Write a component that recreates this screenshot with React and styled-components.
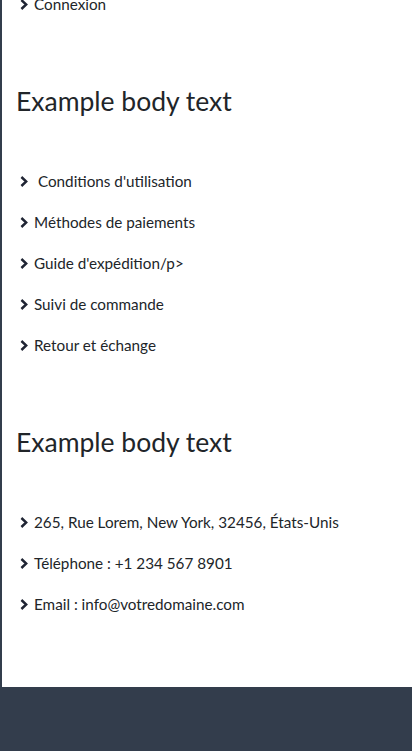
import React from "react"
import styled, { createGlobalStyle } from "styled-components"

const GlobalStyle = createGlobalStyle`
  html, body {
    margin: 0;
    padding: 0;
    background: #333d4c;
    font-family: Lato, "Open Sans", sans-serif;
    color: #212529;
  }
`

const Panel = styled.div`
  margin-left: 2px;
  background: #ffffff;
  padding: 0 14px 62px;
  overflow: hidden;
`

const Footer = styled.div`
  height: 64px;
  background: #333d4c;
`

const Heading = styled.h2`
  margin: 61px 0 44px;
  font-size: 26.5px;
  font-weight: 400;
  line-height: 31px;
  color: #212529;
`

const List = styled.ul`
  list-style: none;
  margin: ${props => (props.$first ? "-16px 0 0" : "0")};
  padding: 0 0 0 4px;
`

const Item = styled.li`
  display: flex;
  align-items: center;
  padding: 8px 0;
  line-height: 25px;
  font-size: 15.25px;
  color: #212529;
  white-space: pre;
`

const Chevron = styled.svg`
  width: 8px;
  height: 11px;
  margin-right: 6px;
  flex-shrink: 0;
`

const Arrow = () => (
  <Chevron viewBox="0 0 8 11">
    <polyline
      points="1.4,1 6.2,5.5 1.4,10"
      fill="none"
      stroke="#1f2433"
      strokeWidth="2.4"
      strokeLinejoin="miter"
    />
  </Chevron>
)

const links = [
  " Conditions d'utilisation",
  "Méthodes de paiements",
  "Guide d'expédition/p>",
  "Suivi de commande",
  "Retour et échange",
]

const contacts = [
  "265, Rue Lorem, New York, 32456, États-Unis",
  "Téléphone : +1 234 567 8901",
  "Email : info@votredomaine.com",
]

const App = () => (
  <div>
    <GlobalStyle />
    <Panel>
      <List $first>
        <Item><Arrow />Connexion</Item>
      </List>
      <Heading>Example body text</Heading>
      <List>
        {links.map(text => (
          <Item key={text}><Arrow />{text}</Item>
        ))}
      </List>
      <Heading>Example body text</Heading>
      <List>
        {contacts.map(text => (
          <Item key={text}><Arrow />{text}</Item>
        ))}
      </List>
    </Panel>
    <Footer />
  </div>
)

export default App
